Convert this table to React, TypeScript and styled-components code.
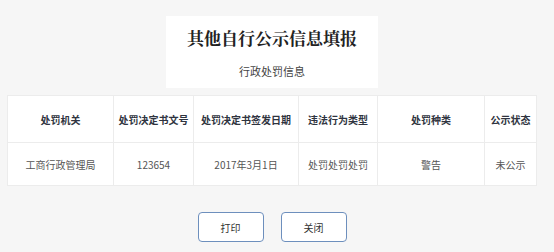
import React from 'react';
import styled, { createGlobalStyle } from 'styled-components';

const GlobalStyle = createGlobalStyle`
  html, body {
    margin: 0;
    padding: 0;
    background: #f6f6f6;
  }
  body {
    font-family: "Noto Sans CJK SC", "Noto Sans", sans-serif;
    color: #333;
  }
`;

const Page = styled.div`
  width: 530px;
  padding: 16px 0 0 7px;
`;

const Heading = styled.div`
  width: 212px;
  height: 72px;
  margin: 0 auto 7px;
  background: #fff;
  display: flex;
  flex-direction: column;
  align-items: center;
`;

const Title = styled.h1`
  margin: 11px 0 0;
  font-size: 17px;
  line-height: 22px;
  font-weight: 700;
  color: #222;
  font-family: "Noto Serif CJK SC", "Noto Sans CJK SC", serif;
`;

const SubTitle = styled.div`
  margin-top: 14px;
  font-size: 11px;
  line-height: 16px;
  color: #444;
`;

const Table = styled.table`
  width: 530px;
  border-collapse: collapse;
  background: #fff;
  table-layout: fixed;
  font-size: 10px;
`;

const Th = styled.th<{ $w?: number }>`
  ${(p) => (p.$w ? `width: ${p.$w}px;` : '')}
  height: 46px;
  padding: 0;
  border: 1px solid #ececec;
  font-weight: 700;
  color: #2f3440;
  text-align: center;
`;

const Td = styled.td`
  height: 42px;
  padding: 0;
  border: 1px solid #ececec;
  color: #555;
  text-align: center;
`;

const Actions = styled.div`
  display: flex;
  justify-content: center;
  gap: 17px;
  margin-top: 26px;
`;

const Button = styled.button`
  width: 66px;
  height: 30px;
  border: 1px solid #6d8fbd;
  border-radius: 4px;
  background: #fff;
  color: #333;
  font-family: inherit;
  font-size: 10px;
  cursor: pointer;
`;

// last column takes what is left
const columns = [
  { title: '处罚机关', width: 105 },
  { title: '处罚决定书文号', width: 79 },
  { title: '处罚决定书签发日期', width: 104 },
  { title: '违法行为类型', width: 78 },
  { title: '处罚种类', width: 106 },
  { title: '公示状态' },
];

const row = ['工商行政管理局', '123654', '2017年3月1日', '处罚处罚处罚', '警告', '未公示'];

export default function App() {
  return (
    <>
      <GlobalStyle />
      <Page>
        <Heading>
          <Title>其他自行公示信息填报</Title>
          <SubTitle>行政处罚信息</SubTitle>
        </Heading>
        <Table>
          <thead>
            <tr>
              {columns.map((c) => (
                <Th key={c.title} $w={c.width}>
                  {c.title}
                </Th>
              ))}
            </tr>
          </thead>
          <tbody>
            <tr>
              {row.map((v, i) => (
                <Td key={i}>{v}</Td>
              ))}
            </tr>
          </tbody>
        </Table>
        <Actions>
          <Button>打印</Button>
          <Button>关闭</Button>
        </Actions>
      </Page>
    </>
  );
}
